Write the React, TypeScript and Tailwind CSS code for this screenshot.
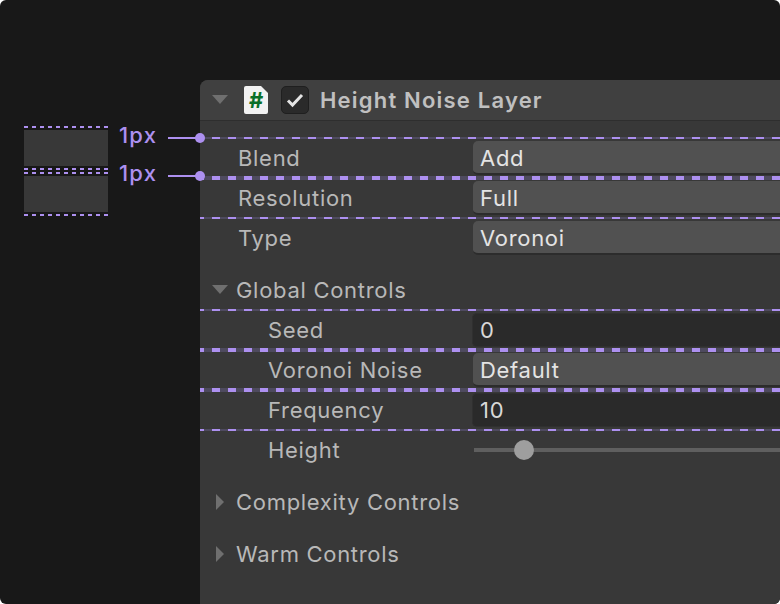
const font = "font-['Inter',sans-serif]";

const panelDash = "bg-[repeating-linear-gradient(90deg,#ad90f0_0,#ad90f0_4px,#4e4a5e_4px,#4e4a5e_12px,#ad90f0_12px,#ad90f0_16px)]";
const sampleDash = "h-[2px] bg-[repeating-linear-gradient(90deg,#ad90f0_0,#ad90f0_4px,transparent_4px,transparent_8px)]";

function Dash({ thick }: { thick?: boolean }) {
  return <div className={`absolute left-0 right-0 ${thick ? "-bottom-[2px] h-[4px]" : "-bottom-[1px] h-[2px]"} ${panelDash}`} />;
}

function Triangle({ open }: { open?: boolean }) {
  return (
    <svg width="16" height="16" viewBox="0 0 16 16" className="shrink-0">
      {open ? <path d="M0 3h16l-8 9z" fill="#6f6f6f" /> : <path d="M4 0l8 8-8 8z" fill="#6f6f6f" />}
    </svg>
  );
}

function Field({ value, kind }: { value: string; kind: "select" | "input" }) {
  return (
    <div
      className={
        kind === "select"
          ? "ml-[1px] flex h-[34px] flex-1 items-center rounded-l-[5px] border-b-2 border-[#2c2c2c] bg-[#515151] pl-[7px] pt-[2px] text-[#e4e4e4]"
          : "flex h-[34px] flex-1 items-center rounded-l-[5px] border border-r-0 border-[#303030] bg-[#2a2a2a] pl-[7px] text-[#d8d8d8]"
      }
    >
      {value}
    </div>
  );
}

function Row({
  label,
  value,
  kind,
  indent,
  dash,
}: {
  label: string;
  value: string;
  kind: "select" | "input";
  indent?: boolean;
  dash?: "thin" | "thick";
}) {
  return (
    <div className="relative flex h-[40px] items-center">
      <div className={indent ? "w-[272px] pl-[68px] text-[#b8b8b8]" : "w-[272px] pl-[38px] text-[#b8b8b8]"}>{label}</div>
      <Field value={value} kind={kind} />
      {dash && <Dash thick={dash === "thick"} />}
    </div>
  );
}

function Sample() {
  return (
    <div className="flex w-[84px] shrink-0 flex-col">
      <div className={`mb-[2px] ${sampleDash}`} />
      <div className="h-[36px] bg-[#383838]" />
      <div className={`mt-[2px] ${sampleDash}`} />
      <div className={`mt-[2px] ${sampleDash}`} />
      <div className="mt-[2px] h-[36px] bg-[#383838]" />
      <div className={`mt-[2px] ${sampleDash}`} />
    </div>
  );
}

function Callout() {
  return (
    <div className="flex h-[38px] items-center">
      <span className="-mt-[6px] w-[49px] text-[22px] font-medium tracking-[1.2px] text-[#ad90f0]">1px</span>
      <div className="h-[2px] w-[32px] shrink-0 bg-[#ad90f0]" />
      <div className="-ml-[5px] h-[10px] w-[10px] shrink-0 rounded-full bg-[#ad90f0]" />
    </div>
  );
}

export default function App() {
  return (
    <div className={`${font} flex h-[604px] w-[780px] overflow-hidden rounded-[6px] bg-[#181818] text-[22px] tracking-[0.7px]`}>
      <div className="flex w-[200px] shrink-0 pl-[24px] pt-[126px]">
        <Sample />
        <div className="relative z-10 ml-[11px] mt-[-7px] flex w-[86px] shrink-0 flex-col">
          <Callout />
          <Callout />
        </div>
      </div>
      <div className="mt-[80px] flex-1 overflow-hidden rounded-tl-[8px] bg-[#383838]">
        <div className="flex h-[41px] items-center border-b border-[#2e2e2e] bg-[#404040] pl-[12px]">
          <Triangle open />
          <svg width="24" height="28" viewBox="0 0 24 28" className="ml-[16px] shrink-0">
            <path d="M2 0h15l7 7v19a2 2 0 0 1-2 2H2a2 2 0 0 1-2-2V2a2 2 0 0 1 2-2z" fill="#f2f2f2" />
          </svg>
          <span className="-ml-[19px] w-[14px] text-center text-[22px] font-bold tracking-normal text-[#0a6f28]">#</span>
          <div className="ml-[18px] flex h-[28px] w-[28px] items-center justify-center rounded-[5px] border border-[#1f1f1f] bg-[#2a2a2a]">
            <svg width="18" height="18" viewBox="0 0 18 18" fill="none" stroke="#e4e4e4" strokeWidth="3">
              <path d="M2 9.5l4.5 4.5L16 4" />
            </svg>
          </div>
          <span className="ml-[11px] font-semibold tracking-[1.2px] text-[#c0c0c0]">Height Noise Layer</span>
        </div>
        <div className="relative mt-[17px]">
          <div className={`absolute left-0 right-0 top-0 -mt-px h-[2px] ${panelDash}`} />
          <Row label="Blend" value="Add" kind="select" dash="thick" />
          <Row label="Resolution" value="Full" kind="select" dash="thin" />
          <Row label="Type" value="Voronoi" kind="select" />
        </div>
        <div className="relative mt-[12px] flex h-[40px] items-center pl-[12px] text-[#b8b8b8]">
          <Triangle open />
          <span className="ml-[8px]">Global Controls</span>
          <Dash />
        </div>
        <Row label="Seed" value="0" kind="input" indent dash="thick" />
        <Row label="Voronoi Noise" value="Default" kind="select" indent dash="thick" />
        <Row label="Frequency" value="10" kind="input" indent dash="thin" />
        <div className="flex h-[40px] items-center">
          <div className="w-[272px] pl-[68px] text-[#b8b8b8]">Height</div>
          <div className="relative ml-[2px] h-[4px] flex-1 bg-[#5f5f5f]">
            <div className="absolute left-[40px] top-[-8px] h-[20px] w-[20px] rounded-full bg-[#9e9e9e]" />
          </div>
        </div>
        <div className="mt-[12px] flex h-[40px] items-center pl-[12px] text-[#b8b8b8]">
          <Triangle />
          <span className="ml-[8px]">Complexity Controls</span>
        </div>
        <div className="mt-[12px] flex h-[40px] items-center pl-[12px] text-[#b8b8b8]">
          <Triangle />
          <span className="ml-[8px]">Warm Controls</span>
        </div>
      </div>
    </div>
  );
}
